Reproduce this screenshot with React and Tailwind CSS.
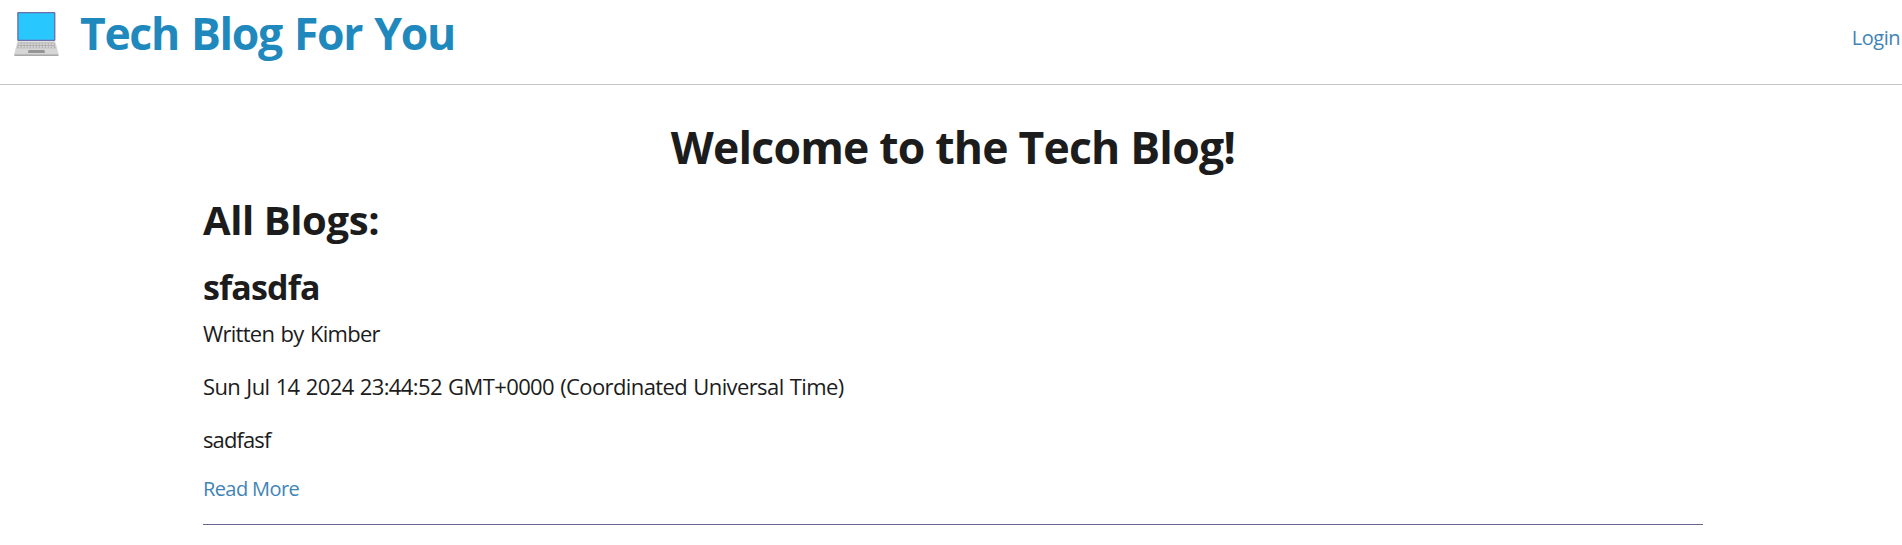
function LaptopIcon() {
  const keys = Array.from({ length: 12 }, (_, i) => 4.6 + i * 3.02);
  return (
    <svg width="46" height="46" viewBox="0 0 46 46" aria-hidden="true">
      <rect x="3.2" y="0" width="38.2" height="29" rx="1.2" fill="#6a6fae" />
      <rect x="4.6" y="1.3" width="35.4" height="26.4" fill="#28c8ff" />
      <path d="M3.4 29.2H41.2L44.6 42.2H0.2Z" fill="#d6d6d6" />
      <path d="M0.2 42.2H44.6V43.2Q44.6 44 43.8 44H1Q0.2 44 0.2 43.2Z" fill="#a9a9a9" />
      <path d="M4.4 30.6H40.2L41.6 36.2H3Z" fill="#b2b0b0" />
      {keys.map((x) => (
        <path key={x} d={`M${x} 31.2h2v1.9h-2zM${x} 34h2v1.7h-2z`} fill="#d9d7d7" />
      ))}
      <path d="M14.6 38H30.4L31 41H14Z" fill="#969494" />
    </svg>
  );
}

export default function App() {
  return (
    <div className="min-h-[545px] bg-white font-['Open_Sans','Noto_Sans',sans-serif] text-[#1c1c1c]">
      <header className="flex h-[85px] items-start justify-between border-b border-[#c4c4c4]">
        <div className="flex items-start pl-[14px]">
          <div className="pt-3">
            <LaptopIcon />
          </div>
          <h1 className="ml-5 pt-[3px] text-[44.5px] leading-[60px] font-bold tracking-[-1.35px] [word-spacing:2px] text-[#1f89bd]">
            Tech Blog For You
          </h1>
        </div>
        <a href="#login" className="mr-[2px] pt-[23px] text-[20px] leading-[30px] tracking-[-0.5px] text-[#3f84b5]">
          Login
        </a>
      </header>
      <main className="mx-auto w-[1500px] translate-x-[2px] pt-[34px]">
        <h1 className="text-center text-[44.5px] leading-[56px] font-bold tracking-[-0.8px]">
          Welcome to the Tech Blog!
        </h1>
        <h2 className="mt-5 text-[40px] leading-[50px] font-bold tracking-[-0.4px]">All Blogs:</h2>
        <article className="mt-[21px] border-b border-[#68648f] pb-5">
          <h3 className="text-[34px] leading-[42px] font-bold tracking-[-0.85px]">sfasdfa</h3>
          <p className="mt-[9px] text-[22px] leading-[33px] tracking-[-0.75px] [word-spacing:1.5px]">Written by Kimber</p>
          <p className="mt-5 text-[22px] leading-[33px] tracking-[-0.6px] [word-spacing:1px]">
            Sun Jul 14 2024 23:44:52 GMT+0000 (Coordinated Universal Time)
          </p>
          <p className="mt-5 text-[22px] leading-[33px] tracking-[-0.9px]">sadfasf</p>
          <a href="#post" className="mt-[18px] block w-fit text-[20px] leading-[30px] tracking-[-0.6px] text-[#3f84b5]">
            Read More
          </a>
        </article>
      </main>
    </div>
  );
}
